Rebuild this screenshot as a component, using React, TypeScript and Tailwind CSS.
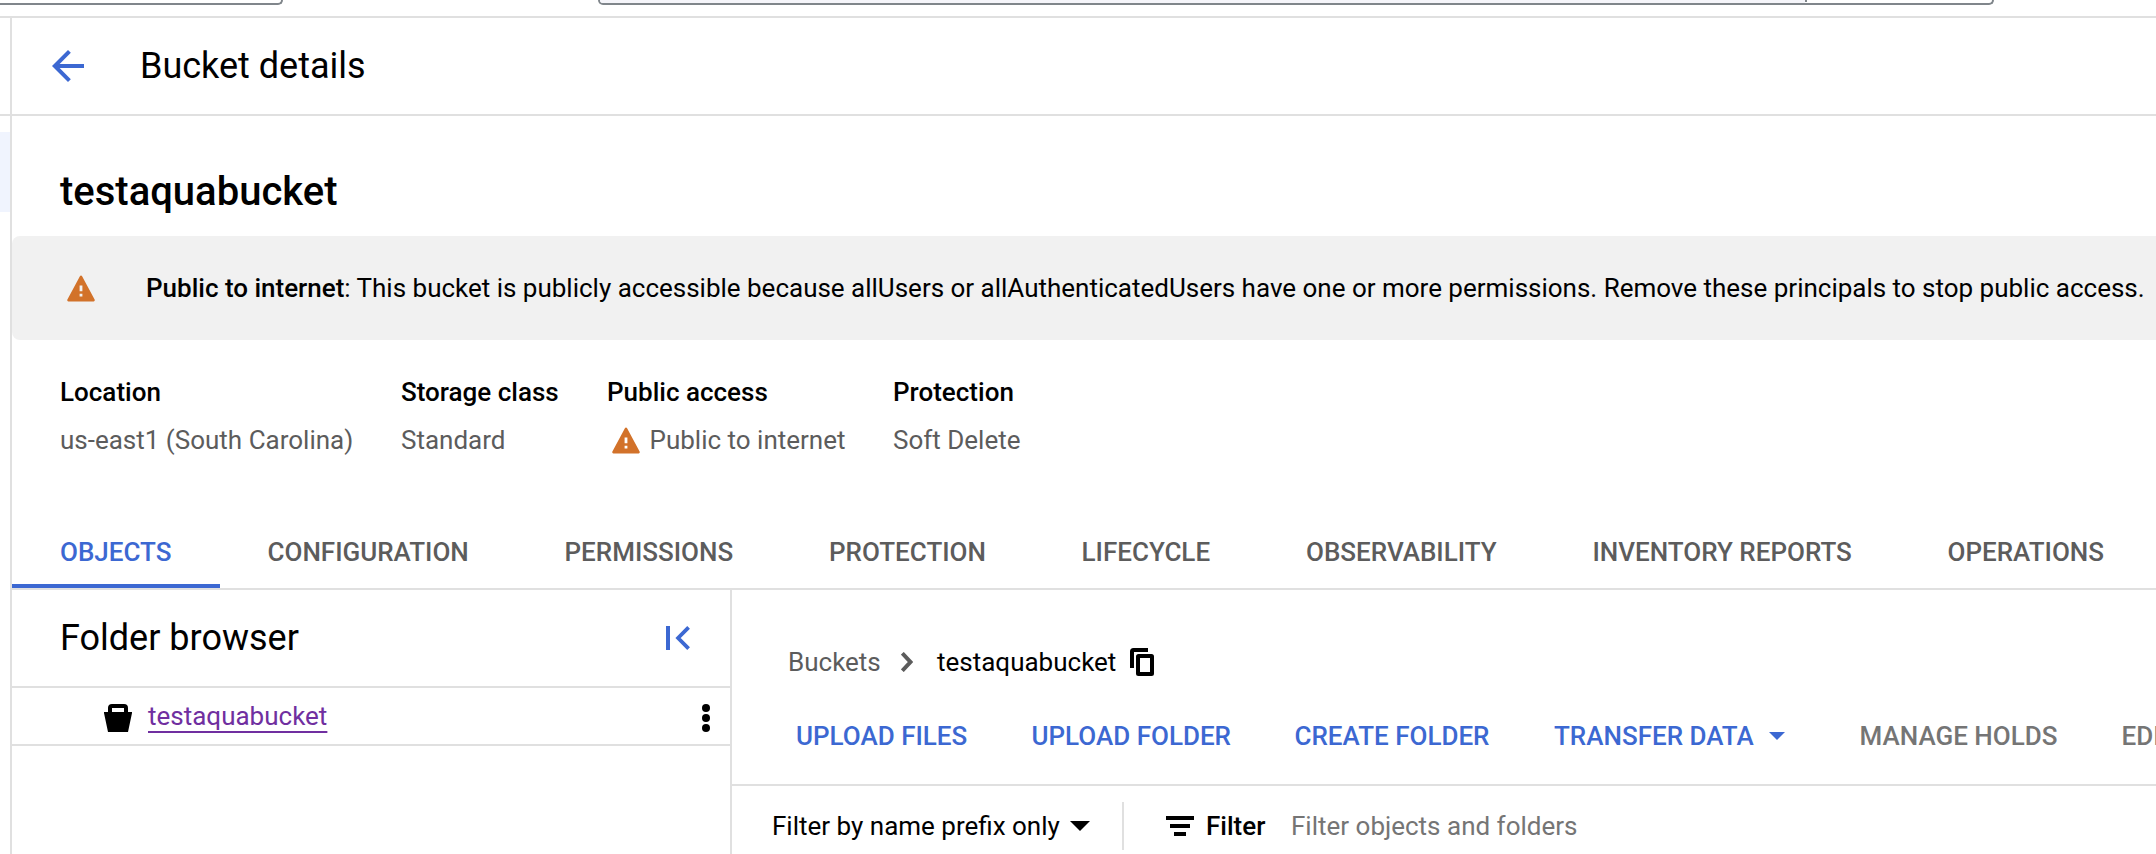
import React from "react";

function Warning({ className, mark }: { className: string; mark: string }) {
  return (
    <svg viewBox="0 0 28 27" className={className} fill="#d2722a">
      <path d="M12.9 1.2a1.3 1.3 0 0 1 2.2 0L27.6 24.6a1.2 1.2 0 0 1-1 1.8H1.4a1.2 1.2 0 0 1-1-1.8z" />
      <path className={mark} d="M12.6 10.5h2.8v5.8h-2.8zM12.6 18.8h2.8v2.8h-2.8z" />
    </svg>
  );
}

const facts = [
  { label: "Location", value: "us-east1 (South Carolina)", box: "w-[341px]" },
  { label: "Storage class", value: "Standard", box: "w-[206px]" },
  { label: "Public access", value: "Public to internet", box: "w-[286px]", warn: true },
  { label: "Protection", value: "Soft Delete", box: "w-[200px]" },
];

const tabs = [
  { name: "OBJECTS", box: "w-[207.5px]", active: true },
  { name: "CONFIGURATION", box: "w-[297px]" },
  { name: "PERMISSIONS", box: "w-[264.5px]" },
  { name: "PROTECTION", box: "w-[252.5px]" },
  { name: "LIFECYCLE", box: "w-[224.5px]" },
  { name: "OBSERVABILITY", box: "w-[286.5px]" },
  { name: "INVENTORY REPORTS", box: "w-[355px]" },
  { name: "OPERATIONS", box: "w-[253px]" },
];

const actions = [
  { name: "UPLOAD FILES", box: "w-[235.5px]" },
  { name: "UPLOAD FOLDER", box: "w-[263px]" },
  { name: "CREATE FOLDER", box: "w-[259.5px]" },
  { name: "TRANSFER DATA", box: "w-[305.5px]", menu: true },
  { name: "MANAGE HOLDS", box: "w-[262px]", disabled: true },
  { name: "EDIT RETENTION", box: "w-[260px]", disabled: true },
];

function TopBar() {
  return (
    <div className="flex h-[18px] shrink-0 items-start border-b-2 border-[#e0e0e0]">
      <div className="h-[5px] w-[283px] rounded-br-[9px] border-r-2 border-b-2 border-[#80868b]" />
      <div className="ml-[315px] flex h-[5px] w-[1396px] overflow-hidden rounded-b-[9px] border-x-2 border-b-2 border-[#80868b]">
        <div className="w-[1205px] bg-[#f5f5fa]" />
        <div className="h-[2px] w-[2px] bg-[#80868b]" />
      </div>
    </div>
  );
}

function FolderBrowser() {
  return (
    <aside className="flex w-[720px] shrink-0 flex-col border-r-2 border-[#e0e0e0]">
      <div className="flex h-[98px] items-center justify-between border-b-2 border-[#e0e0e0] pr-[40px] pl-12">
        <h2 className="text-[36px] leading-[48px]">Folder browser</h2>
        <svg className="h-[24px] w-[24px]" viewBox="0 0 24 24" fill="none" stroke="#3c68d2">
          <path strokeWidth="4" d="M2 0v24" />
          <path strokeWidth="3.8" d="M22.6 1.4 12.1 12l10.5 10.6" />
        </svg>
      </div>
      <div className="flex h-[58px] items-center border-b-2 border-[#e0e0e0] pr-[20px] pl-[92px]">
        <svg className="mt-1 h-[28px] w-[28px]" viewBox="0 0 28 28">
          <path fillRule="evenodd" d="M0 8h4V4a4 4 0 0 1 4-4h12a4 4 0 0 1 4 4v4h4v1l-4 19H4L0 9zM8 4v4h12V4z" />
        </svg>
        <a className="ml-4 text-[#702fa0] underline decoration-2 underline-offset-[6px]">testaquabucket</a>
        <svg className="mt-1 ml-auto h-[28px] w-[8px]" viewBox="0 0 8 28">
          <circle cx="4" cy="4" r="4" />
          <circle cx="4" cy="14" r="4" />
          <circle cx="4" cy="24" r="4" />
        </svg>
      </div>
    </aside>
  );
}

function Objects() {
  return (
    <section className="flex min-w-0 flex-1 flex-col overflow-hidden">
      <div className="flex h-[196px] shrink-0 flex-col border-b-2 border-[#e0e0e0] pt-[52px]">
        <div className="flex h-10 items-center pl-[56px]">
          <span className="w-[113px] text-[#5c5c5c]">Buckets</span>
          <svg className="h-[20px] w-[12px]" viewBox="0 0 12 20" fill="none" stroke="#5c5c5c" strokeWidth="4">
            <path d="M1.3 1.3 9.4 10l-8.1 8.7" />
          </svg>
          <span className="ml-[24px] w-[193px]">testaquabucket</span>
          <svg className="h-[28px] w-[24px]" viewBox="0 0 24 28" fill="none" stroke="#000" strokeWidth="4">
            <path d="M18 2H3.5A1.5 1.5 0 0 0 2 3.500V20" />
            <rect x="8" y="8" width="14" height="18" rx="0.5" />
          </svg>
        </div>
        <div className="mt-[34px] flex h-10 items-center pl-[64px]">
          {actions.map((a) => (
            <button
              key={a.name}
              className={`flex shrink-0 items-center font-medium whitespace-nowrap ${a.box} ${a.disabled ? "text-[#757575]" : "text-[#3c68d2]"}`}
            >
              {a.name}
              {a.menu && (
                <svg className="ml-[15px] h-[8px] w-[16px]" viewBox="0 0 16 8" fill="#3c68d2">
                  <path d="M0 0h16L8 8z" />
                </svg>
              )}
            </button>
          ))}
        </div>
      </div>
      <div className="flex h-20 shrink-0 items-center pl-[40px]">
        <span className="w-[298px] whitespace-nowrap">Filter by name prefix only</span>
        <svg className="h-[10px] w-[20px]" viewBox="0 0 20 10">
          <path d="M0 0h20L10 10z" />
        </svg>
        <div className="ml-[32px] h-12 w-[2px] bg-[#e0e0e0]" />
        <svg className="ml-[42px] h-[20px] w-[28px]" viewBox="0 0 28 20">
          <path d="M0 0h28v4H0zM4 8h20v4H4zM8 16h12v4H8z" />
        </svg>
        <span className="ml-[12px] w-[85px] font-medium">Filter</span>
        <span className="text-[#757575]">Filter objects and folders</span>
      </div>
    </section>
  );
}

export default function App() {
  return (
    <div className="flex h-[854px] w-[2156px] flex-col overflow-hidden bg-white font-[Roboto,sans-serif] text-[26px] leading-[40px] text-black">
      <TopBar />
      <div className="flex min-h-0 flex-1">
        <nav className="flex w-[10px] shrink-0 flex-col">
          <div className="h-[98px] shrink-0 border-b-2 border-[#e0e0e0]" />
          <div className="mt-4 h-20 bg-[#f0f4fe]" />
        </nav>
        <main className="flex min-w-0 flex-1 flex-col border-l-2 border-[#e0e0e0]">
          <header className="flex h-[98px] shrink-0 items-center border-b-2 border-[#e0e0e0] pl-[40px]">
            <svg className="h-[32px] w-[32px]" viewBox="4 4 16 16" fill="#3c68d2">
              <path d="M20 11H7.83l5.59-5.59L12 4l-8 8 8 8 1.41-1.41L7.83 13H20v-2z" />
            </svg>
            <h1 className="ml-[56px] text-[36px] leading-[48px]">Bucket details</h1>
          </header>
          <h2 className="mt-[52px] mb-[20px] h-12 shrink-0 pl-12 text-[40px] leading-[48px] font-medium">testaquabucket</h2>
          <div className="flex h-[104px] shrink-0 items-center rounded-l-[8px] bg-[#f1f1f1] pl-[54.5px]">
            <Warning className="h-[27px] w-[28px] shrink-0" mark="fill-[#f1f1f1]" />
            <p className="ml-[51.500px] tracking-[-0.008px] whitespace-nowrap">
              <b className="font-medium">Public to internet</b>: This bucket is publicly accessible because allUsers or
              allAuthenticatedUsers have one or more permissions. Remove these principals to stop public access.
            </p>
          </div>
          <dl className="mt-8 flex h-[88px] shrink-0 pl-12">
            {facts.map((f) => (
              <div key={f.label} className={`flex shrink-0 flex-col gap-2 ${f.box}`}>
                <dt className="font-medium">{f.label}</dt>
                <dd className="flex items-center whitespace-nowrap text-[#5c5c5c]">
                  {f.warn && <Warning className="mr-[10px] ml-[4.5px] h-[27px] w-[28px]" mark="fill-white" />}
                  {f.value}
                </dd>
              </div>
            ))}
          </dl>
          <div className="mt-[60px] flex h-[70px] shrink-0 border-b-2 border-[#e0e0e0]">
            {tabs.map((t) => (
              <button
                key={t.name}
                className={`flex h-[68px] shrink-0 items-center border-b-4 pl-12 font-medium whitespace-nowrap ${t.box} ${t.active ? "border-[#3c68d2] text-[#3c68d2]" : "border-transparent text-[#5c5c5c]"}`}
              >
                {t.name}
              </button>
            ))}
          </div>
          <div className="flex min-h-0 flex-1">
            <FolderBrowser />
            <Objects />
          </div>
        </main>
      </div>
    </div>
  );
}
